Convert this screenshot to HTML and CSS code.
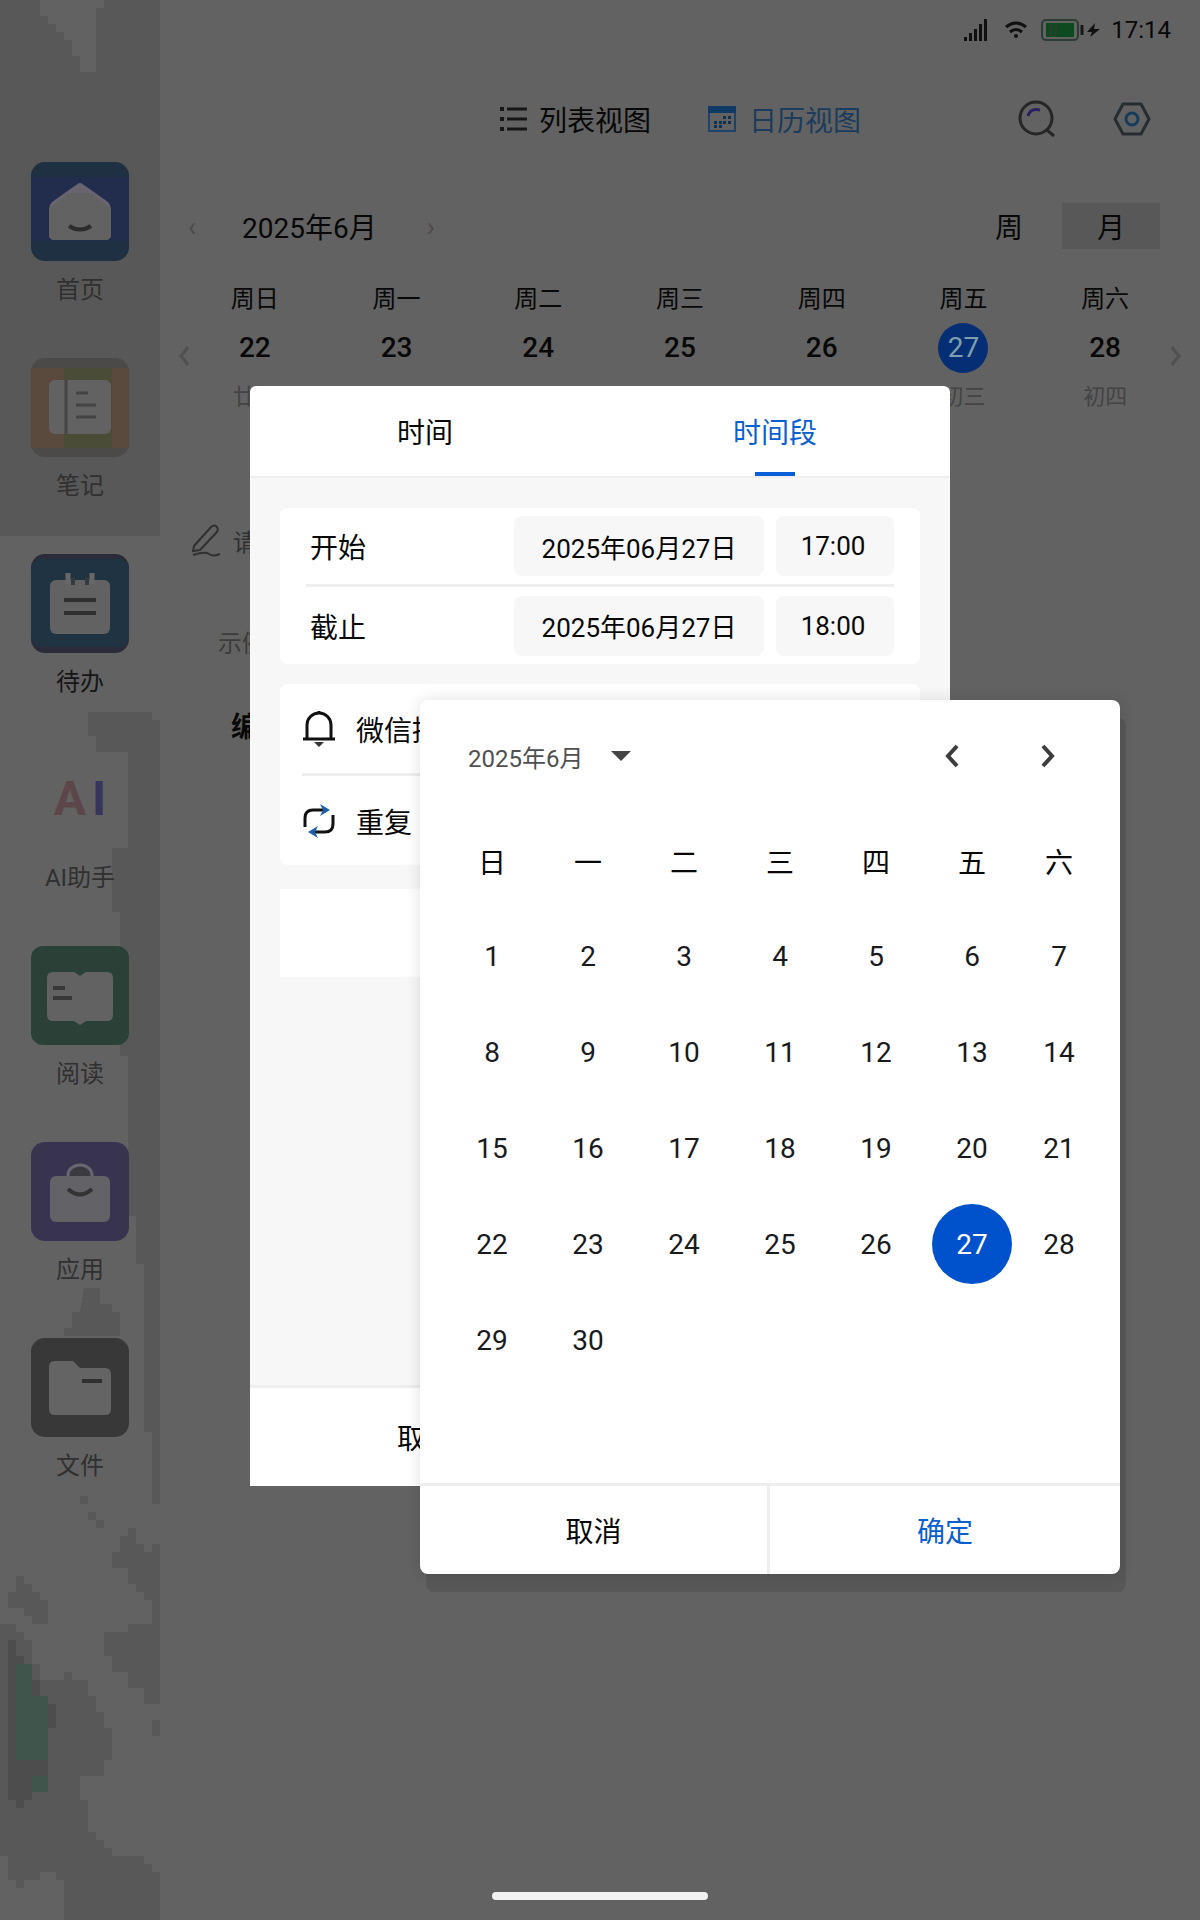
FILE: index.html
```html
<!DOCTYPE html>
<html lang="zh-CN">
<head>
<meta charset="utf-8">
<title>待办</title>
<meta name="viewport" content="width=device-width, initial-scale=1">
<link rel="stylesheet" href="styles.css">
</head>
<body>
<div class="app">
  <nav class="sidebar">
    <svg class="wallpaper" viewBox="0 0 160 1920" preserveAspectRatio="none" shape-rendering="crispEdges" aria-hidden="true">
      <path fill="#585858" d="M0 0H40V16H48V24H56V32H64V40H72V56H80V72H96V8H104V0H160V536H0Z"/>
      <path fill="#585858" d="M88 712H152V720H160V1504H152V1432H144V1264H136V1216H128V1056H120V912H112V848H128V752H96V736H88Z"/>
      <path fill="#585858" d="M84 1288H100V1304H112V1312H120V1336H64V1328H72V1312H80Z"/>
      <path fill="#585858" d="M80 1496h8v8h-8zM88 1512h8v8h-8zM96 1520h8v8h-8zM128 1528h8v16h8v8h8v-8h8V1704h-16v-16h-16v-16h-16v-16h-8v-24h24v-8h24v-24h-8v-8h-8v-8h-8v-16h-16v-16h8v-16h8zM152 1720h8v16h-8z"/>
      <path fill="#585858" d="M16 1576h8v8h8v8h8v8h8v24H32v-8h-8v-8H8v-16h8z"/>
      <path fill="#585858" d="M0 1624H16V1632H24V1640H32V1664H40V1680H64V1672H72V1680H88V1696H96V1712H104V1728H112V1760H104V1776H80V1800H88V1832H96V1840H104V1848H112V1856H144V1864H152V1872H160V1920H64V1880H56V1872H40V1880H24V1888H16V1880H8V1856H0Z"/>
      <path fill="#4d4d4d" d="M8 1640h8v16h8v8h8v16h8v16h8v8h8v24h-8v48h-16v24h-8v8h-8v-8H8z"/>
      <path fill="#40564c" d="M16 1664h16v32h16v64H16zM32 1776h16v16H32z"/>
    </svg>
    <ul class="nav-list">
      <li><a class="nav-item" href="#home">
        <svg class="tile" viewBox="0 0 100 100"><rect x="1" y="1" width="98" height="99" rx="14" fill="#1f3042"/><rect x="1" y="16" width="98" height="64" fill="#222d4d"/><path fill="#686570" d="M46 24Q50 20 54 24L78 41Q81 44 81 48V73Q81 79 75 79H25Q19 79 19 73V48Q19 44 22 41Z"/><path fill="#626262" d="M19 47 40 32H60L81 47V73Q81 79 75 79H25Q19 79 19 73Z"/><path d="M39 65Q50 72 61 65" fill="none" stroke="#2c2c2c" stroke-width="4"/></svg>
        <span>首页</span></a></li>
      <li><a class="nav-item" href="#notes">
        <svg class="tile" viewBox="0 0 100 100"><rect x="1" y="1" width="98" height="99" rx="14" fill="#4c4a48"/><path fill="#594a3d" d="M1 11H99V91H1Z"/><path fill="#4a4c37" d="M34 11H82V91H34Z"/><rect x="19" y="23" width="62" height="54" rx="6" fill="#626262"/><path d="M36 23V77" stroke="#454545" stroke-width="3"/><path d="M46 36H58M46 48H66M46 60H66" stroke="#444" stroke-width="3"/></svg>
        <span>笔记</span></a></li>
      <li><a class="nav-item active" href="#todo">
        <svg class="tile" viewBox="0 0 100 100"><rect x="1" y="1" width="98" height="99" rx="14" fill="#2b2b39"/><rect x="1" y="6" width="98" height="88" rx="10" fill="#203342"/><rect x="20" y="27" width="60" height="54" rx="6" fill="#626262"/><path d="M38 20V31M62 20V31" stroke="#686868" stroke-width="5"/><path d="M43 25V32M57 25V32" stroke="#343c42" stroke-width="4"/><path d="M34 47H66M34 60H66" stroke="#303030" stroke-width="4"/></svg>
        <span>待办</span></a></li>
      <li><a class="nav-item" href="#ai">
        <b class="tile ai"><i class="ai-a">A</i><i class="ai-i">I</i></b>
        <span>AI助手</span></a></li>
      <li><a class="nav-item" href="#read">
        <svg class="tile" viewBox="0 0 100 100"><rect x="1" y="1" width="98" height="99" rx="12" fill="#2b4138"/><path fill="#626262" d="M23 27H44L50 31 56 27H77Q83 27 83 33V70Q83 76 77 76H56L50 80 44 76H23Q17 76 17 70V33Q17 27 23 27Z"/><path d="M23 43H35M23 53H42" stroke="#383838" stroke-width="4"/></svg>
        <span>阅读</span></a></li>
      <li><a class="nav-item" href="#apps">
        <svg class="tile" viewBox="0 0 100 100"><rect x="1" y="1" width="98" height="99" rx="14" fill="#383450"/><path d="M38 37V34A12 10 0 0 1 62 34V37" fill="#3b3a40" stroke="#686570" stroke-width="3"/><rect x="20" y="35" width="60" height="46" rx="6" fill="#636266"/><path d="M38 48Q50 59 62 48" fill="none" stroke="#333" stroke-width="4"/></svg>
        <span>应用</span></a></li>
      <li><a class="nav-item" href="#files">
        <svg class="tile" viewBox="0 0 100 100"><rect x="1" y="1" width="98" height="99" rx="14" fill="#383838"/><path fill="#646464" d="M25 24H43L50 31H75Q81 31 81 37V72Q81 78 75 78H25Q19 78 19 72V30Q19 24 25 24Z"/><path d="M52 44H72" stroke="#303030" stroke-width="4"/></svg>
        <span>文件</span></a></li>
    </ul>
  </nav>

  <main class="main">
    <header class="status">
      <svg width="26" height="22" viewBox="0 0 26 22"><path fill="#101010" d="M1 18h3v4H1zM6 14h3v8H6zM11 10h3v12h-3zM16 5h3v17h-3zM21 0h3v22h-3z"/></svg>
      <svg width="22" height="18" viewBox="0 0 22 18"><g fill="none" stroke="#101010" stroke-width="3"><path d="M1 6Q11 -2 21 6M5 11Q11 6 17 11"/></g><circle cx="11" cy="15" r="2" fill="#101010"/></svg>
      <svg class="battery" width="60" height="22" viewBox="0 0 60 22"><rect x="1" y="1" width="36" height="20" rx="4" fill="none" stroke="#2c3c34" stroke-width="2"/><rect x="5" y="4" width="28" height="14" fill="#0d4a20"/><path d="M10 5V17M15 5V17" stroke="#2c3c34" stroke-width="2"/><path d="M41 6V16" stroke="#181818" stroke-width="3"/><path fill="#101010" d="M54 4 46 13H51L49 18 59 10H53Z"/></svg>
      <time>17:14</time>
    </header>

    <div class="toolbar">
      <div class="views">
        <button class="view" type="button">
          <svg width="28" height="28" viewBox="0 0 28 28"><path d="M8 4H28M8 14H28M8 24H28" stroke="#161616" stroke-width="3"/><path fill="#161616" d="M1 2h4v4H1zM1 12h4v4H1zM1 22h4v4H1z"/></svg>
          列表视图</button>
        <button class="view selected" type="button">
          <svg width="30" height="28" viewBox="0 0 30 28"><rect x="2" y="2" width="26" height="24" fill="none" stroke="#1d4468" stroke-width="2"/><path fill="#0f3a66" d="M1 1H29V8H1z"/><path fill="#0f3050" d="M16 11h3v3h-3zM21 11h3v3h-3zM7 16h3v3H7zM12 16h3v3h-3zM16 16h3v3h-3zM21 16h3v3h-3zM7 20h3v3H7zM12 20h3v3h-3z"/></svg>
          日历视图</button>
      </div>
      <div class="tools">
        <button type="button" aria-label="搜索"><svg width="40" height="38" viewBox="0 0 40 38"><g fill="none" stroke-width="3"><circle cx="19" cy="18" r="16" stroke="#262626"/><path d="M30 30 37 36" stroke="#262626"/><path d="M11 16Q13 8 23 10" stroke="#292062"/></g></svg></button>
        <button type="button" aria-label="设置"><svg width="38" height="38" viewBox="0 0 38 38"><g fill="none" stroke-width="3"><path d="M10 4H28L36 19 28 34H10L2 19Z" stroke="#262c30" stroke-linejoin="round"/><circle cx="19" cy="19" r="6" stroke="#153c5c"/></g></svg></button>
      </div>
    </div>

    <div class="period">
      <button class="step" type="button" aria-label="上月">‹</button>
      <h1>2025年6月</h1>
      <button class="step" type="button" aria-label="下月">›</button>
      <div class="range"><button type="button">周</button><button class="on" type="button">月</button></div>
    </div>

    <section class="week">
      <button class="step" type="button" aria-label="上周"><svg width="14" height="24" viewBox="0 0 14 24"><path d="M11 3 4 12 11 21" fill="none" stroke="#505050" stroke-width="3"/></svg></button>
      <ol class="days">
        <li><span>周日</span><b>22</b><small>廿七</small></li>
        <li><span>周一</span><b>23</b></li>
        <li><span>周二</span><b>24</b></li>
        <li><span>周三</span><b>25</b></li>
        <li><span>周四</span><b>26</b></li>
        <li class="today"><span>周五</span><b>27</b><small>初三</small></li>
        <li><span>周六</span><b>28</b><small>初四</small></li>
      </ol>
      <button class="step" type="button" aria-label="下周"><svg width="14" height="24" viewBox="0 0 14 24"><path d="M3 3 10 12 3 21" fill="none" stroke="#505050" stroke-width="3"/></svg></button>
    </section>

    <section class="tasks">
      <p class="entry"><svg width="32" height="34" viewBox="0 0 32 34"><g fill="none" stroke="#303030" stroke-width="2"><path d="M3 23 20 4Q24 1 26 4 28 7 25 10L9 27 2 28Z"/><path d="M2 32Q14 28 18 31T29 31"/></g></svg>请</p>
      <p class="sample">示例</p>
      <h2>编</h2>
    </section>
  </main>
  <div class="home-bar"></div>

  <section class="dialog time-dialog" role="dialog" aria-label="时间段">
    <div class="tabs"><button type="button">时间</button><button class="on" type="button">时间段</button></div>
    <div class="settings">
      <div class="card">
        <div class="row"><span>开始</span><button class="date" type="button">2025年06月27日</button><button class="clock" type="button">17:00</button></div>
        <div class="row"><span>截止</span><button class="date" type="button">2025年06月27日</button><button class="clock" type="button">18:00</button></div>
      </div>
      <div class="card options">
        <div class="row"><svg width="34" height="36" viewBox="0 0 34 36"><path d="M5 28V14A12 12 0 0 1 29 14V28M1 28H33M17 0V3" fill="none" stroke="#111" stroke-width="3"/><path fill="#333" d="M12 31H22L17 36Z"/></svg><span>微信提醒</span></div>
        <div class="row"><svg width="34" height="36" viewBox="0 0 34 36"><g fill="none" stroke="#111" stroke-width="3"><path d="M3 24V15Q3 7 11 7H22M31 12V21Q31 29 23 29H12"/></g><path fill="#1b5fae" d="M18 1 28 7 18 13 21 7ZM16 23 6 29 16 35 13 29Z"/></svg><span>重复</span></div>
      </div>
      <div class="card blank"></div>
    </div>
    <div class="actions"><button type="button">取消</button><button class="ok" type="button">确定</button></div>
  </section>

  <section class="dialog date-dialog" role="dialog" aria-label="选择日期">
    <div class="picker">
      <button class="month" type="button">2025年6月 <svg width="20" height="10" viewBox="0 0 20 10"><path fill="#444" d="M0 0H20L10 10Z"/></svg></button>
      <div class="arrows">
        <button type="button" aria-label="上月"><svg width="16" height="24" viewBox="0 0 16 24"><path d="M13 2 4 12 13 22" fill="none" stroke="#3c3c3c" stroke-width="4"/></svg></button>
        <button type="button" aria-label="下月"><svg width="16" height="24" viewBox="0 0 16 24"><path d="M3 2 12 12 3 22" fill="none" stroke="#3c3c3c" stroke-width="4"/></svg></button>
      </div>
    </div>
    <table class="calendar">
      <thead><tr><th>日</th><th>一</th><th>二</th><th>三</th><th>四</th><th>五</th><th>六</th></tr></thead>
      <tbody>
        <tr><td>1</td><td>2</td><td>3</td><td>4</td><td>5</td><td>6</td><td>7</td></tr>
        <tr><td>8</td><td>9</td><td>10</td><td>11</td><td>12</td><td>13</td><td>14</td></tr>
        <tr><td>15</td><td>16</td><td>17</td><td>18</td><td>19</td><td>20</td><td>21</td></tr>
        <tr><td>22</td><td>23</td><td>24</td><td>25</td><td>26</td><td><button class="picked" type="button">27</button></td><td>28</td></tr>
        <tr><td>29</td><td>30</td><td></td><td></td><td></td><td></td><td></td></tr>
      </tbody>
    </table>
    <div class="actions"><button type="button">取消</button><button class="ok" type="button">确定</button></div>
  </section>
</div>
</body>
</html>
```
FILE: styles.css
```css
* { box-sizing: border-box; }
body {
  margin: 0;
  font-family: Roboto, "Noto Sans CJK SC", sans-serif;
  font-size: 28px;
  color: #080808;
  background: #626262;
}
button {
  font: inherit;
  color: inherit;
  background: none;
  border: 0;
  padding: 0;
  cursor: pointer;
}
svg { display: block; flex: none; }
ul, ol { list-style: none; margin: 0; padding: 0; }
h1, h2, p { margin: 0; font-weight: 400; }
h1, h2 { font-size: 28px; }

.app {
  position: relative;
  display: grid;
  grid-template-columns: 160px 1fr;
  min-height: 100vh;
}

/* sidebar */
.sidebar { position: relative; }
.wallpaper { position: absolute; inset: 0; width: 100%; height: 100%; }
.nav-list { position: relative; padding-top: 161px; }
.nav-item {
  display: flex;
  flex-direction: column;
  align-items: center;
  gap: 11px;
  height: 196px;
  font-size: 24px;
  line-height: 36px;
  color: #303030;
  text-decoration: none;
}
.nav-item.active { color: #161616; }
.tile { width: 100px; height: 100px; }
.ai {
  display: flex;
  align-items: center;
  justify-content: center;
  gap: 6px;
  font-size: 48px;
}
.ai i { font-style: normal; }
.ai-a { color: #5c464a; }
.ai-i { color: #38345c; }

/* main */
.status {
  display: flex;
  align-items: center;
  justify-content: flex-end;
  gap: 16px;
  height: 60px;
  padding-right: 29px;
  font-size: 24px;
}
.battery { margin: 0 -6px 0 -2px; }
.toolbar {
  display: grid;
  grid-template-columns: 1fr auto 1fr;
  align-items: center;
  height: 118px;
}
.views { grid-column: 2; display: flex; gap: 56px; }
.view { display: flex; align-items: center; gap: 12px; }
.view.selected { color: #1b3c5c; }
.tools { display: flex; justify-content: flex-end; gap: 56px; padding-right: 49px; }

.period {
  display: flex;
  align-items: center;
  height: 96px;
  padding: 0 40px 0 16px;
}
.period h1 { margin: 0 38px 0 34px; }
.step { width: 32px; color: #4c4c4c; }
.range { display: flex; gap: 4px; margin-left: auto; }
.range button { width: 98px; height: 46px; }
.range .on { background: #585858; }

.week { display: grid; grid-template-columns: 16px 1fr 16px; padding: 8px 8px 0; }
.week .step { display: flex; align-items: center; justify-content: center; height: 148px; }
.days { display: grid; grid-template-columns: repeat(7, 1fr); }
.week .step:last-child { justify-self: end; }
.days li { display: flex; flex-direction: column; align-items: center; }
.days span { font-size: 24px; line-height: 34px; }
.days b {
  width: 50px;
  height: 50px;
  margin: 7px 0 6px;
  border-radius: 50%;
  font-weight: 500;
  line-height: 50px;
  text-align: center;
}
.days small { font-size: 22px; line-height: 36px; color: #444; }
.today b { background: #062e74; color: #7d9fae; font-weight: 400; }

.tasks { padding: 78px 0 0 31px; }
.entry { display: flex; align-items: center; gap: 10px; height: 64px; font-size: 24px; color: #303030; }
.sample { margin: 54px 0 0 27px; font-size: 24px; line-height: 36px; color: #3c3c3c; }
.tasks h2 { margin: 46px 0 0 40px; font-weight: 700; line-height: 40px; }

.home-bar {
  position: absolute;
  bottom: 20px;
  left: 41%;
  right: 41%;
  height: 8px;
  border-radius: 4px;
  background: #f0f0f0;
}

/* dialogs float above the page */
.dialog { position: absolute; display: flex; flex-direction: column; background: #fff; }
.actions { display: grid; grid-template-columns: 1fr 1fr; border-top: 3px solid #eee; }
.ok { color: #0a5fd0; }

.time-dialog {
  top: 386px;
  left: 250px;
  right: 250px;
  height: 1100px;
  border-radius: 6px 6px 0 0;
}
.tabs { display: grid; grid-template-columns: 1fr 1fr; height: 90px; }
.tabs .on {
  color: #0a5fd0;
  background: linear-gradient(#0b5fd8, #0b5fd8) center bottom / 40px 4px no-repeat;
}
.settings {
  flex: 1;
  display: flex;
  flex-direction: column;
  gap: 20px;
  padding: 30px;
  border-top: 2px solid #eee;
  background: #f7f7f7;
}
.card { padding: 0 26px; border-radius: 8px; background: #fff; }
.row { display: flex; align-items: center; height: 76px; }
.row span { flex: 1; padding-left: 4px; }
.row + .row { border-top: 3px solid #eee; height: 80px; }
.date, .clock { height: 60px; border-radius: 8px; background: #f7f7f7; font-size: 26px; }
.date { width: 250px; margin-right: 12px; }
.clock { width: 118px; padding-right: 4px; }
.options { padding: 0 22px; }
.options .row { height: 89px; gap: 16px; }
.options .row + .row { height: 92px; }
.options .row span { padding: 0 0 0 4px; }
.blank { height: 88px; margin-top: 4px; border-radius: 0; }
.time-dialog .actions { height: 101px; }

.date-dialog {
  top: 700px;
  left: 420px;
  right: 80px;
  height: 874px;
  border-radius: 8px;
  box-shadow: 0 0 16px rgba(0, 0, 0, .12), 6px 18px 0 #585858;
}
.picker {
  display: flex;
  align-items: center;
  justify-content: space-between;
  height: 114px;
  padding: 0 64px 2px 48px;
}
.month { display: flex; align-items: center; gap: 28px; font-size: 24px; color: #505050; }
.arrows { display: flex; gap: 80px; }
.calendar { margin: 0 22px 0 24px; border-collapse: collapse; table-layout: fixed; text-align: center; color: #1a1a1a; }
.calendar th { width: 96px; height: 94px; padding: 0; font-weight: 400; color: #080808; }
.calendar th:last-child { width: 78px; }
.calendar td { height: 96px; padding: 0; }
.picked { width: 80px; height: 80px; border-radius: 50%; background: #0052cc; color: #fff; }
.date-dialog .actions { margin-top: auto; height: 91px; }
.date-dialog .actions button:first-child { border-right: 3px solid #eee; }
```
